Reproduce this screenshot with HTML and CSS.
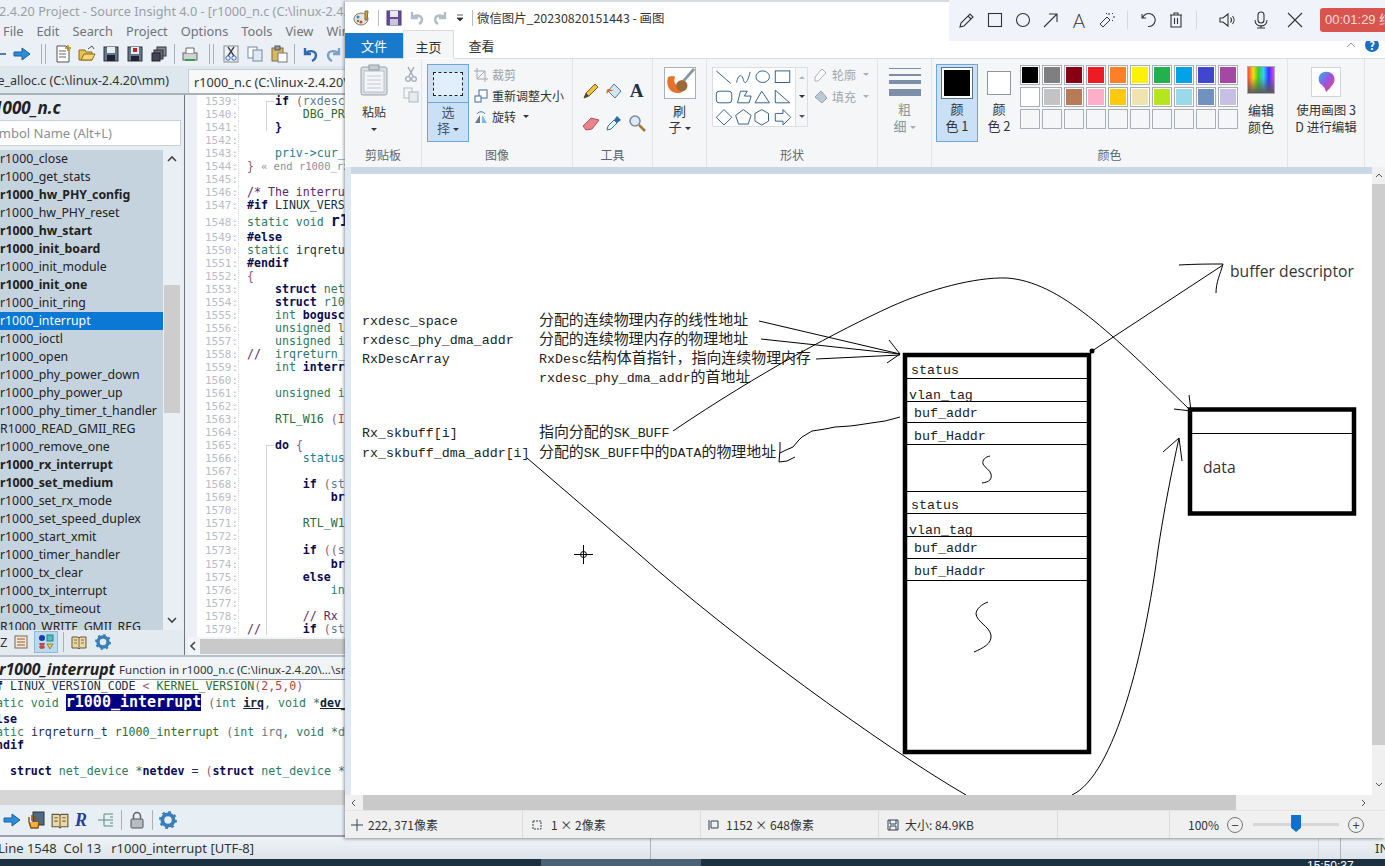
FILE: index.html
```html
<!DOCTYPE html>
<html lang="zh">
<head>
<meta charset="utf-8">
<title>Source Insight and Paint</title>
<link rel="stylesheet" href="styles.css">
</head>
<body>
<div class="desktop">

  <section class="si">
    <div class="si-title">2.4.20 Project - Source Insight 4.0 - [r1000_n.c (C:\linux-2.4.20\drivers\net)]</div>
    <nav class="si-menu"><span>File</span><span>Edit</span><span>Search</span><span>Project</span><span>Options</span><span>Tools</span><span>View</span><span>Window</span></nav>
    <div class="si-toolbar">
      <svg class="ic18 nudge-left" viewBox="0 0 18 18"><path d="M17 9H9V4L1 9l8 5v-5z" fill="#2b8fd8" stroke="#1a5d9c"/></svg>
      <svg class="ic18" viewBox="0 0 18 18"><path d="M1 7h8V3l8 6-8 6v-4H1z" fill="#2b8fd8" stroke="#1a5d9c"/></svg>
      <i class="grip"></i>
      <svg class="ic18" viewBox="0 0 18 18"><path d="M3 1h9l3 3v13H3z" fill="#fff" stroke="#555"/><path d="M5 6h7M5 9h7M5 12h7" stroke="#666"/><path d="M14 0v6M11 3h6" stroke="#b8860b" stroke-width="1.5"/></svg>
      <svg class="ic18" viewBox="0 0 18 18"><path d="M1 5h6l1 2h6v8H1z" fill="#e8c050" stroke="#8a6a20"/><path d="M3 15l3-6h11l-3 6z" fill="#f4d878" stroke="#8a6a20"/><path d="M10 4l4-3 2 3" fill="none" stroke="#555"/></svg>
      <svg class="ic18" viewBox="0 0 18 18"><rect x="2" y="2" width="14" height="14" fill="#64788c" stroke="#333"/><rect x="5" y="2" width="8" height="6" fill="#e8eef2"/><rect x="5" y="10" width="8" height="6" fill="#223"/></svg>
      <svg class="ic18" viewBox="0 0 18 18"><rect x="2" y="2" width="14" height="14" fill="#64788c" stroke="#333"/><rect x="5" y="2" width="8" height="7" fill="#e8eef2"/><rect x="7" y="3" width="4" height="4" fill="#d02020"/><rect x="5" y="11" width="8" height="5" fill="#223"/></svg>
      <svg class="ic18" viewBox="0 0 18 18"><rect x="7" y="2" width="9" height="9" fill="#889" stroke="#333"/><rect x="4" y="5" width="9" height="9" fill="#667" stroke="#333"/><rect x="2" y="8" width="8" height="8" fill="#445" stroke="#222"/></svg>
      <i class="bar"></i>
      <svg class="ic18" viewBox="0 0 18 18"><rect x="2" y="8" width="14" height="7" fill="#cfd3d6" stroke="#666"/><path d="M5 8V3h8v5" fill="#fff" stroke="#666"/><path d="M4 15h10" stroke="#38a048" stroke-width="2"/></svg>
      <i class="grip"></i>
      <svg class="ic18" viewBox="0 0 18 18"><rect x="2" y="1" width="14" height="16" fill="#eef2f6" stroke="#888"/><path d="M6 2l6 9M12 2l-6 9" stroke="#445" stroke-width="1.4"/><circle cx="6" cy="13" r="2.2" fill="none" stroke="#36a"/><circle cx="12" cy="13" r="2.2" fill="none" stroke="#36a"/></svg>
      <svg class="ic18" viewBox="0 0 18 18"><rect x="2" y="2" width="9" height="11" fill="#fff" stroke="#789"/><rect x="7" y="5" width="9" height="11" fill="#dfe9f3" stroke="#789"/></svg>
      <svg class="ic18" viewBox="0 0 18 18"><rect x="2" y="3" width="11" height="13" fill="#d9b860" stroke="#765"/><rect x="5" y="1" width="5" height="4" fill="#999" stroke="#555"/><rect x="8" y="8" width="9" height="9" fill="#fff" stroke="#777"/></svg>
      <i class="bar"></i>
      <svg class="ic18" viewBox="0 0 18 18"><path d="M4 3v6h6M4 9c3-4 10-4 11 1 0 3-2 5-4 6" fill="none" stroke="#3468b0" stroke-width="2.4"/></svg>
      <svg class="ic18" viewBox="0 0 18 18"><path d="M14 3v6H8M14 9c-3-4-10-4-11 1 0 3 2 5 4 6" fill="none" stroke="#7d9fc8" stroke-width="2.4"/></svg>
    </div>
    <div class="si-tabs">
      <div class="si-tab">page_alloc.c (C:\linux-2.4.20\mm)</div>
      <div class="si-tab-on">r1000_n.c (C:\linux-2.4.20\drivers\net)</div>
    </div>

    <div class="si-main">
      <aside class="sym">
        <div class="sym-file">r1000_n.c</div>
        <div class="sym-search"><span>Symbol Name (Alt+L)</span></div>
        <div class="sym-body">
          <ul class="sym-list">
            <li>r1000_close</li>
            <li>r1000_get_stats</li>
            <li class="b">r1000_hw_PHY_config</li>
            <li>r1000_hw_PHY_reset</li>
            <li class="b">r1000_hw_start</li>
            <li class="b">r1000_init_board</li>
            <li>r1000_init_module</li>
            <li class="b">r1000_init_one</li>
            <li>r1000_init_ring</li>
            <li class="sel">r1000_interrupt</li>
            <li>r1000_ioctl</li>
            <li>r1000_open</li>
            <li>r1000_phy_power_down</li>
            <li>r1000_phy_power_up</li>
            <li>r1000_phy_timer_t_handler</li>
            <li>R1000_READ_GMII_REG</li>
            <li>r1000_remove_one</li>
            <li class="b">r1000_rx_interrupt</li>
            <li class="b">r1000_set_medium</li>
            <li>r1000_set_rx_mode</li>
            <li>r1000_set_speed_duplex</li>
            <li>r1000_start_xmit</li>
            <li>r1000_timer_handler</li>
            <li>r1000_tx_clear</li>
            <li>r1000_tx_interrupt</li>
            <li>r1000_tx_timeout</li>
            <li>R1000_WRITE_GMII_REG</li>
          </ul>
          <div class="sym-scroll">
            <svg class="chev" viewBox="0 0 10 10"><path d="M1 7l4-4 4 4" fill="none" stroke="#444" stroke-width="1.6"/></svg>
            <div class="sym-thumb"></div>
            <svg class="chev chev-end" viewBox="0 0 10 10"><path d="M1 3l4 4 4-4" fill="none" stroke="#444" stroke-width="1.6"/></svg>
          </div>
        </div>
        <div class="sym-tools">
          <b class="az">Z</b>
          <svg class="ic16" viewBox="0 0 16 16"><rect x="2" y="2" width="12" height="12" fill="#f2e8d8" stroke="#765"/><path d="M4 5h8M4 8h8M4 11h8" stroke="#a05030"/></svg>
          <span class="sym-active"><svg class="ic16" viewBox="0 0 16 16"><circle cx="4" cy="4" r="3" fill="#1040b0"/><rect x="9" y="1" width="6" height="6" fill="#50c0c0" stroke="#287"/><path d="M1 10h6M1 13h6M3 9v6M5 9v6" stroke="#c02020" stroke-width="1.2"/><path d="M9 10h6l-3 5z" fill="#e8d040" stroke="#885"/></svg></span>
          <i class="bar"></i>
          <svg class="ic16 book" viewBox="0 0 16 16"><path d="M1 3h6l1 1 1-1h6v11H9l-1 1-1-1H1z" fill="#ecd9a0" stroke="#654"/><path d="M8 4v10M3 6h3M3 9h3M10 6h3M10 9h3" stroke="#765"/></svg>
          <svg class="ic16 gear" viewBox="0 0 16 16"><circle cx="8" cy="8" r="5" fill="none" stroke="#3b7fb8" stroke-width="3.4"/><circle cx="8" cy="8" r="7" fill="none" stroke="#3b7fb8" stroke-width="2" stroke-dasharray="2.4 3.1"/></svg>
        </div>
      </aside>

      <div class="editor-col">
        <div class="editor">
          <div class="guide guide-a"></div>
          <div class="guide guide-b"></div>
<div class="ed">
<span class="ln"><i>1539:</i><span class="k">    if</span> <span class="p">(</span><span class="v">rxdesc_</span></span>
<span class="ln"><i>1540:</i><span class="f">        DBG_PR</span></span>
<span class="ln"><i>1541:</i><span class="k">    }</span></span>
<span class="ln"><i>1542:</i></span>
<span class="ln"><i>1543:</i><span class="m">    priv-&gt;cur_</span></span>
<span class="ln"><i>1544:</i><span class="p">}</span> <span class="end">« end r1000_rx_</span></span>
<span class="ln"><i>1545:</i></span>
<span class="ln"><i>1546:</i><span class="c">/* The interru</span></span>
<span class="ln"><i>1547:</i><span class="k">#if</span> <span class="t">LINUX_VERS</span></span>
<span class="ln ln-big"><i>1548:</i><span class="g">static void </span><span class="big">r1000</span></span>
<span class="ln"><i>1549:</i><span class="k">#else</span></span>
<span class="ln"><i>1550:</i><span class="g">static</span> <span class="t">irqretu</span></span>
<span class="ln"><i>1551:</i><span class="k">#endif</span></span>
<span class="ln"><i>1552:</i><span class="p">{</span></span>
<span class="ln"><i>1553:</i><span class="k">    struct</span> <span class="g">net_</span></span>
<span class="ln"><i>1554:</i><span class="k">    struct</span> <span class="g">r10</span></span>
<span class="ln"><i>1555:</i><span class="g">    int</span> <span class="k">bogusc</span></span>
<span class="ln"><i>1556:</i><span class="g">    unsigned l</span></span>
<span class="ln"><i>1557:</i><span class="g">    unsigned i</span></span>
<span class="ln"><i>1558:</i><span class="c">//  </span><span class="g">irqreturn_</span></span>
<span class="ln"><i>1559:</i><span class="g">    int</span> <span class="k">interr</span></span>
<span class="ln"><i>1560:</i></span>
<span class="ln"><i>1561:</i><span class="g">    unsigned i</span></span>
<span class="ln"><i>1562:</i></span>
<span class="ln"><i>1563:</i><span class="f">    RTL_W16</span> <span class="p">(</span><span class="r">I</span></span>
<span class="ln"><i>1564:</i></span>
<span class="ln"><i>1565:</i><span class="k">    do</span> <span class="p">{</span></span>
<span class="ln"><i>1566:</i><span class="m">        status</span></span>
<span class="ln"><i>1567:</i></span>
<span class="ln"><i>1568:</i><span class="k">        if</span> <span class="p">(</span><span class="v">st</span></span>
<span class="ln"><i>1569:</i><span class="k">            br</span></span>
<span class="ln"><i>1570:</i></span>
<span class="ln"><i>1571:</i><span class="f">        RTL_W1</span></span>
<span class="ln"><i>1572:</i></span>
<span class="ln ln-tall"><i>1573:</i><span class="k">        if</span> <span class="p">((</span><span class="v">s</span></span>
<span class="ln ln-tall"><i>1574:</i><span class="k">            br</span></span>
<span class="ln"><i>1575:</i><span class="k">        else</span></span>
<span class="ln"><i>1576:</i><span class="m">            in</span></span>
<span class="ln"><i>1577:</i></span>
<span class="ln"><i>1578:</i><span class="c">        // Rx</span></span>
<span class="ln"><i>1579:</i><span class="c">//</span><span class="k">      if</span> <span class="p">(</span><span class="v">st</span></span>
</div>
        </div>
        <div class="ed-hscroll"><svg class="chev" viewBox="0 0 10 10"><path d="M7 1L3 5l4 4" fill="none" stroke="#444" stroke-width="1.6"/></svg><div class="ed-hthumb"></div></div>
      </div>
    </div>

    <div class="ctx-head"><strong>r1000_interrupt</strong><span>Function in r1000_n.c (C:\linux-2.4.20\...\src\r1000_n.c)</span></div>
<div class="ctx">
<span class="cl"><span class="k">#if</span> <span class="t">LINUX_VERSION_CODE</span> <span class="p">&lt;</span> <span class="f">KERNEL_VERSION</span><span class="p">(</span><span class="r">2,5,0</span><span class="p">)</span></span>
<span class="cl cl-big"><span class="g">static void </span><span class="hl">r1000_interrupt</span> <span class="p">(</span><span class="g">int</span> <u>irq</u><span class="g">, void *</span><u>dev_id</u></span>
<span class="cl"><span class="k">#else</span></span>
<span class="cl"><span class="g">static</span> <span class="t">irqreturn_t</span> <span class="f">r1000_interrupt</span> <span class="p">(</span><span class="g">int</span> <span class="v">irq</span><span class="g">, void *</span><span class="v">dev_id</span></span>
<span class="cl"><span class="k">#endif</span></span>
<span class="cl"> </span>
<span class="cl"><span class="k">    struct</span> <span class="g">net_device *</span><span class="k">netdev</span> <span class="t">=</span> <span class="p">(</span><span class="k">struct</span> <span class="g">net_device *</span></span>
</div>
    <div class="ctx-band"></div>
    <div class="si-bottomtools">
      <svg class="ic18" viewBox="0 0 18 18"><path d="M1 7h8V3l8 6-8 6v-4H1z" fill="#2b8fd8" stroke="#1a5d9c"/></svg>
      <svg class="ic18" viewBox="0 0 18 18"><rect x="6" y="1" width="11" height="13" fill="#4e6a86" stroke="#333"/><path d="M2 11V6M5 10V4M8 10V5M11 11V7M2 11l2 6h7l1-6" fill="#f0b040" stroke="#8a5010" stroke-width="1.4"/></svg>
      <svg class="ic18" viewBox="0 0 16 16"><path d="M1 3h6l1 1 1-1h6v11H9l-1 1-1-1H1z" fill="#ecd9a0" stroke="#654"/><path d="M8 4v10M3 6h3M3 9h3M10 6h3M10 9h3" stroke="#765"/></svg>
      <b class="si-r">R</b>
      <svg class="ic18" viewBox="0 0 18 18"><path d="M1 9h6M7 3v12M7 3h9M7 9h9M7 15h9M13 6h3M13 12h3" fill="none" stroke="#5a8a7a"/></svg>
      <i class="bar"></i>
      <svg class="ic18" viewBox="0 0 18 18"><rect x="3" y="8" width="12" height="9" rx="1" fill="#b4bcc4" stroke="#555"/><path d="M5.500 8V5a3.500 3.500 0 017 0v3" fill="none" stroke="#666" stroke-width="1.6"/></svg>
      <i class="bar"></i>
      <svg class="ic18" viewBox="0 0 16 16"><circle cx="8" cy="8" r="5" fill="none" stroke="#3b7fb8" stroke-width="3.4"/><circle cx="8" cy="8" r="7" fill="none" stroke="#3b7fb8" stroke-width="2" stroke-dasharray="2.4 3.1"/></svg>
    </div>
    <footer class="si-status">
      <span class="si-status-text">Line 1548&nbsp;&nbsp;Col 13&nbsp;&nbsp;&nbsp;r1000_interrupt [UTF-8]</span>
      <i class="st-sep st-a"></i><i class="st-sep st-b"></i><i class="st-sep st-c"></i><span class="st-ins">INS</span>
    </footer>
  </section>

  <section class="paint">
    <header class="p-title">
      <svg class="ic18" viewBox="0 0 18 18"><ellipse cx="8" cy="10" rx="7" ry="6" fill="#e8e4d8" stroke="#7a7a70"/><circle cx="5" cy="8" r="1.500" fill="#3a7fd0"/><circle cx="8" cy="13" r="1.500" fill="#d04040"/><circle cx="5" cy="12" r="1.300" fill="#40a050"/><path d="M12 2h3l-1 9h-2z" fill="#d8a030" stroke="#865"/></svg>
      <i class="p-vsep"></i>
      <svg class="ic16" viewBox="0 0 16 16"><rect x="1" y="1" width="14" height="14" fill="#6a4a9a" stroke="#4a3a7a"/><rect x="4" y="1" width="8" height="6" fill="#e8e8f0"/><rect x="4" y="9" width="8" height="6" fill="#c8c8d8"/></svg>
      <svg class="ic16" viewBox="0 0 16 16"><path d="M3 2v6h6M3 8c3-4 9-3 10 1 0 3-1 4-3 5" fill="none" stroke="#b4bcc6" stroke-width="2.400"/></svg>
      <svg class="ic16" viewBox="0 0 16 16"><path d="M13 2v6H7M13 8c-3-4-9-3-10 1 0 3 1 4 3 5" fill="none" stroke="#b4bcc6" stroke-width="2.400"/></svg>
      <svg class="ic10" viewBox="0 0 10 10"><path d="M2 2h6M2 5h6l-3 3z" fill="#333" stroke="#333" stroke-width=".8"/></svg>
      <i class="p-vsep"></i>
      <span class="p-name">微信图片_20230820151443 - 画图</span>
    </header>
    <nav class="p-tabs">
      <span class="p-file">文件</span>
      <span class="p-tab p-tab-on">主页</span>
      <span class="p-tab p-tab-view">查看</span>
      <span class="p-help-wrap"><svg class="ic10" viewBox="0 0 10 10"><path d="M1 7l4-4 4 4" fill="none" stroke="#999"/></svg><b class="p-help">?</b></span>
    </nav>

    <div class="ribbon">
      <div class="grp grp-clip">
        <div class="grp-body">
          <div class="paste">
            <svg class="ic-paste" viewBox="0 0 28 32"><rect x="1" y="3" width="26" height="28" rx="2" fill="#d9dfe5" stroke="#97a3af"/><rect x="4" y="7" width="20" height="21" fill="#f3f5f7" stroke="#b8c0c8"/><rect x="9" y="1" width="10" height="5" fill="#c4ccd4" stroke="#8f9ba7"/><path d="M7 12h14M7 16h14M7 20h14M7 24h14" stroke="#c4ccd4"/></svg>
            <span>粘贴</span><em class="caret"></em>
          </div>
          <div class="clip-small">
            <svg class="ic16" viewBox="0 0 16 16"><path d="M5 1l5 9M11 1L6 10" stroke="#9aa4ae" stroke-width="1.500"/><circle cx="5" cy="13" r="2.300" fill="none" stroke="#9aa4ae" stroke-width="1.300"/><circle cx="11" cy="13" r="2.300" fill="none" stroke="#9aa4ae" stroke-width="1.300"/></svg>
            <svg class="ic16" viewBox="0 0 16 16"><rect x="1" y="1" width="8" height="10" fill="#f3f5f7" stroke="#b0b8c0"/><rect x="6" y="5" width="9" height="10" fill="#e6eaee" stroke="#a8b0b8"/></svg>
          </div>
        </div>
        <div class="grp-label">剪贴板</div>
      </div>

      <div class="grp grp-image">
        <div class="grp-body">
          <div class="sel-btn">
            <div class="sel-top"><div class="sel-dash"></div></div>
            <div class="sel-text"><span>选</span><span>择<em class="caret"></em></span></div>
          </div>
          <div class="img-cmds">
            <span class="muted"><svg class="ic14" viewBox="0 0 14 14"><path d="M3 0v11h11M0 3h11v11M3 11l8-8" fill="none" stroke="#a0a8b0"/></svg>裁剪</span>
            <span><svg class="ic14" viewBox="0 0 14 14"><rect x="5" y="1" width="8" height="8" fill="#fff" stroke="#3a6ea8"/><rect x="1" y="7" width="6" height="6" fill="#fff" stroke="#3a6ea8"/></svg>重新调整大小</span>
            <span><svg class="ic14" viewBox="0 0 14 14"><path d="M1 13L6 5v8z" fill="#6a7a8a"/><path d="M8 13V5l5 8z" fill="#7ab8e8"/><path d="M3 4c2-3 6-3 8 0" fill="none" stroke="#2a7ac0"/></svg>旋转<em class="caret"></em></span>
          </div>
        </div>
        <div class="grp-label">图像</div>
      </div>

      <div class="grp grp-tools">
        <div class="grp-body tool-grid">
          <svg class="ic18" viewBox="0 0 18 18"><path d="M2 16l2-5L13 2l3 3-9 9z" fill="#f0c040" stroke="#7a6020"/><path d="M2 16l2-5 3 3z" fill="#444"/></svg>
          <svg class="ic18" viewBox="0 0 18 18"><path d="M9 2l7 7-6 7-7-7z" fill="#d4e4f2" stroke="#4a7aa8"/><path d="M9 9L4 7c-2 0-3 2-2 5 1-2 2-3 4-3z" fill="#d8662a"/></svg>
          <b class="tool-a">A</b>
          <svg class="ic18" viewBox="0 0 18 18"><path d="M1 12l8-8 8 2-7 9-6 1z" fill="#e8848c" stroke="#b05058"/></svg>
          <svg class="ic18" viewBox="0 0 18 18"><path d="M2 16l1-4 6-6 3 3-6 6z" fill="#dff" stroke="#567"/><path d="M9 6l3-4 4 4-4 3z" fill="#2a6ea8"/></svg>
          <svg class="ic18" viewBox="0 0 18 18"><circle cx="7" cy="7" r="5" fill="#dbeaf6" stroke="#7a8a9a" stroke-width="1.500"/><path d="M11 11l6 6" stroke="#a8753a" stroke-width="2.500"/></svg>
        </div>
        <div class="grp-label">工具</div>
      </div>

      <div class="grp grp-brush">
        <div class="grp-body brush">
          <div class="brush-pic"><svg viewBox="0 0 32 32"><path d="M31 1L17 17" stroke="#8a96a0" stroke-width="3"/><path d="M3 10c-3 12 6 19 14 16 5-3 7-8 3-12-3-2-7 0-8 4-2-2-3-5-1-9-3 0-6-1-8 1z" fill="#e8702a"/><ellipse cx="18" cy="19" rx="6" ry="6" fill="#9a6a3a"/></svg></div>
          <span>刷</span><span>子<em class="caret"></em></span>
        </div>
        <div class="grp-label"></div>
      </div>

      <div class="grp grp-shapes">
        <div class="grp-body shapes">
          <div class="gallery">
            <svg class="gallery-pic" viewBox="0 0 82 60">
              <g fill="none" stroke="#2f5f86">
                <path d="M2 3l15 13"/><path d="M23 15c2-10 6-8 7-3s4 5 7-8"/><ellipse cx="50" cy="9" rx="7" ry="6"/><rect x="63" y="3" width="15" height="12"/>
                <rect x="2" y="24" width="16" height="12" rx="3"/><path d="M24 36l3-12h7l-3 5h7l-2 7z"/><path d="M49 24l8 12H42z"/><path d="M63 23v13h15z"/>
                <path d="M10 43l8 8-8 8-8-8z"/><path d="M30 43l8 6-3 9H25l-3-9z"/><path d="M49 43l7 4v8l-7 4-7-4v-8z"/><path d="M63 47h8v-4l8 8-8 8v-4h-8z"/>
              </g>
            </svg>
            <div class="gallery-scroll"><em class="caret caret-up"></em><em class="caret"></em><em class="caret caret-more"></em></div>
          </div>
          <div class="shape-cmds">
            <span><svg class="ic14" viewBox="0 0 14 14"><path d="M1 13V9l7-8 4 4-8 8z" fill="#fff" stroke="#a6b0ba"/></svg>轮廓<em class="caret caret-muted"></em></span>
            <span><svg class="ic14" viewBox="0 0 14 14"><path d="M7 1l6 7-5 5-7-6z" fill="#bcc8d4" stroke="#96a2ae"/></svg>填充<em class="caret caret-muted"></em></span>
          </div>
        </div>
        <div class="grp-label">形状</div>
      </div>

      <div class="grp grp-size">
        <div class="grp-body size">
          <div class="size-lines"><i class="l1"></i><i class="l2"></i><i class="l3"></i><i class="l4"></i></div>
          <span>粗</span><span>细<em class="caret caret-muted"></em></span>
        </div>
        <div class="grp-label"></div>
      </div>

      <div class="grp grp-colors">
        <div class="grp-body colors">
          <div class="col-btn col-on"><div class="swatch-big"><i class="fill-black"></i></div><span>颜</span><span>色 1</span></div>
          <div class="col-btn"><div class="swatch-mid"></div><span>颜</span><span>色 2</span></div>
          <div class="palette">
            <i class="c01"></i><i class="c02"></i><i class="c03"></i><i class="c04"></i><i class="c05"></i><i class="c06"></i><i class="c07"></i><i class="c08"></i><i class="c09"></i><i class="c10"></i>
            <i class="c11"></i><i class="c12"></i><i class="c13"></i><i class="c14"></i><i class="c15"></i><i class="c16"></i><i class="c17"></i><i class="c18"></i><i class="c19"></i><i class="c20"></i>
            <i></i><i></i><i></i><i></i><i></i><i></i><i></i><i></i><i></i><i></i>
          </div>
          <div class="edit-col"><div class="rainbow"></div><span>编辑</span><span>颜色</span></div>
        </div>
        <div class="grp-label">颜色</div>
      </div>

      <div class="grp grp-3d">
        <div class="grp-body p3d">
          <div class="p3d-pic"><svg viewBox="0 0 30 30"><defs><linearGradient id="drop" x1="0" y1="0" x2="1" y2="1"><stop offset="0" stop-color="#28b4e8"/><stop offset=".5" stop-color="#a050e0"/><stop offset="1" stop-color="#f05050"/></linearGradient></defs><path d="M15 4c7 0 10 5 9 10-1 4-6 9-9 12-1-4-2-6-6-9-3-3-3-13 6-13z" fill="url(#drop)"/></svg></div>
          <span>使用画图 3</span><span>D 进行编辑</span>
        </div>
        <div class="grp-label"></div>
      </div>
    </div>

    <div class="workspace">
      <div class="canvas-area">
        <svg class="drawing" viewBox="351 174 1152 648">
          <g class="dg-text">
            <text x="362" y="325"><tspan class="lat">rxdesc_space</tspan></text>
            <text x="362" y="344"><tspan class="lat">rxdesc_phy_dma_addr</tspan></text>
            <text x="362" y="363"><tspan class="lat">RxDescArray</tspan></text>
            <text x="362" y="437"><tspan class="lat">Rx_skbuff[i]</tspan></text>
            <text x="362" y="457"><tspan class="lat">rx_skbuff_dma_addr[i]</tspan></text>
            <text x="539" y="325">分配的连续物理内存的线性地址</text>
            <text x="539" y="344">分配的连续物理内存的物理地址</text>
            <text x="539" y="363"><tspan class="lat">RxDesc</tspan>结构体首指针，指向连续物理内存</text>
            <text x="539" y="382"><tspan class="lat">rxdesc_phy_dma_addr</tspan>的首地址</text>
            <text x="539" y="437">指向分配的<tspan class="lat">SK_BUFF</tspan></text>
            <text x="539" y="457">分配的<tspan class="lat">SK_BUFF</tspan>中的<tspan class="lat">DATA</tspan>的物理地址</text>
            <text x="911" y="374"><tspan class="lat">status</tspan></text>
            <text x="909" y="399"><tspan class="lat">vlan_tag</tspan></text>
            <text x="914" y="417"><tspan class="lat">buf_addr</tspan></text>
            <text x="914" y="440"><tspan class="lat">buf_Haddr</tspan></text>
            <text x="911" y="509"><tspan class="lat">status</tspan></text>
            <text x="909" y="534"><tspan class="lat">vlan_tag</tspan></text>
            <text x="914" y="552"><tspan class="lat">buf_addr</tspan></text>
            <text x="914" y="575"><tspan class="lat">buf_Haddr</tspan></text>
          </g>
          <g class="dg-sans">
            <text x="1230" y="277">buffer descriptor</text>
            <text x="1203" y="473">data</text>
          </g>
          <g fill="none" stroke="#000">
            <rect x="905" y="355" width="184" height="397" stroke-width="4.500"/>
            <rect x="1190" y="409.500" width="164" height="104" stroke-width="4.500"/>
            <path d="M907 378.500H1087M907 401.500H1087M907 422.500H1087M907 444.500H1087M907 491.500H1087M907 513.500H1087M907 536.500H1087M907 558.500H1087M907 580.500H1087M1192 433.500H1352"/>
            <path d="M759 321L900 354M761 339L900 354M816 359L900 355M889 340L900 354L887 363"/>
            <path d="M673 431C760 372 840 330 890 307C930 289 975 277 1007 278C1060 282 1110 332 1190 410M1174 409L1191 411L1189 395"/>
            <path d="M1092 351L1223 265M1179 265C1195 264 1210 264 1223 264C1220 275 1216 282 1216 293"/>
            <path d="M527 458L640 555C730 635 880 745 966 795"/>
            <path d="M1072 795C1115 775 1145 650 1158 550C1164 510 1172 470 1179 438M1163 452L1179 438L1182 461"/>
            <path d="M900 417L885 421L871 423L858 425L850 426L835 427L825 429L812 431L802 437L798 441L793 447L786 450L780 453M780 442L780 450L779 462L787 461L795 457"/>
            <path d="M990 456C985 457 982 460 983 464C985 468 990 470 991 474C992 479 990 482 982 483"/>
            <path d="M988 602C982 604 976 609 976 614C977 622 989 626 991 635C992 644 983 648 974 652"/>
            <circle cx="583.500" cy="554.500" r="3"/>
            <path d="M574 554.500H593M583.500 545V564"/>
          </g>
          <circle cx="1092" cy="351" r="2.500"/>
        </svg>
      </div>
      <div class="vscroll">
        <svg class="chev" viewBox="0 0 10 10"><path d="M2 7l3-3 3 3" fill="none" stroke="#555"/></svg>
        <div class="vthumb"></div>
        <svg class="chev" viewBox="0 0 10 10"><path d="M2 3l3 3 3-3" fill="none" stroke="#555"/></svg>
      </div>
    </div>

    <div class="hscroll">
      <svg class="chev" viewBox="0 0 10 10"><path d="M7 2L4 5l3 3" fill="none" stroke="#555"/></svg>
      <div class="hthumb"></div>
      <svg class="chev chev-right" viewBox="0 0 10 10"><path d="M3 2l3 3-3 3" fill="none" stroke="#555"/></svg>
    </div>

    <footer class="p-status">
      <div class="ps ps1"><svg class="ic12" viewBox="0 0 12 12"><path d="M6 0v12M0 6h12" stroke="#345"/></svg>222, 371像素</div>
      <div class="ps ps2"><svg class="ic12" viewBox="0 0 12 12"><rect x="2" y="2" width="8" height="8" fill="none" stroke="#345" stroke-dasharray="2 1"/></svg>1 × 2像素</div>
      <div class="ps ps3"><svg class="ic12" viewBox="0 0 12 12"><path d="M2 1v10M4 2h7v7H4z" fill="none" stroke="#345"/></svg>1152 × 648像素</div>
      <div class="ps ps4"><svg class="ic12" viewBox="0 0 12 12"><path d="M1 1h10v10H1zM3 1v4h6V1M3 11V7h6v4" fill="none" stroke="#345"/></svg>大小: 84.9KB</div>
      <div class="ps ps5"></div>
      <div class="ps6">
        <span>100%</span>
        <b class="zoom-btn">−</b>
        <div class="slider"><i class="slider-thumb"></i></div>
        <b class="zoom-btn">+</b>
      </div>
    </footer>
  </section>

  <div class="recorder">
    <svg class="ic18 rec" viewBox="0 0 18 18"><path d="M2 16l1-4 9-9 3 3-9 9zM10 5l3 3" fill="none" stroke="#333" stroke-width="1.100"/></svg>
    <svg class="ic18 rec" viewBox="0 0 18 18"><rect x="2.500" y="2.500" width="13" height="13" fill="none" stroke="#333" stroke-width="1.100"/></svg>
    <svg class="ic18 rec" viewBox="0 0 18 18"><circle cx="9" cy="9" r="6.500" fill="none" stroke="#333" stroke-width="1.100"/></svg>
    <svg class="ic18 rec" viewBox="0 0 18 18"><path d="M2 16L15 3M7 3h8v8" fill="none" stroke="#333" stroke-width="1.100"/></svg>
    <span class="rec rec-a">A</span>
    <svg class="ic18 rec" viewBox="0 0 18 18"><path d="M2 13l7-7 3 3-7 7zM11 2v2M15 6h2M14 3l1-1M14 9l1 1M9 3l-1-1" fill="none" stroke="#333"/></svg>
    <i class="rec-sep"></i>
    <svg class="ic18 rec" viewBox="0 0 18 18"><path d="M3 3v4h4M3.500 7A6.500 6.500 0 119 15.500" fill="none" stroke="#333" stroke-width="1.100"/></svg>
    <svg class="ic18 rec" viewBox="0 0 18 18"><path d="M3 4h12M7 4V2h4v2M4 4v12h10V4M7.500 7v6M10.500 7v6" fill="none" stroke="#333" stroke-width="1.100"/></svg>
    <i class="rec-sep rec-sep-lg"></i>
    <svg class="ic18 rec rec-wide" viewBox="0 0 18 18"><path d="M2 7v4h3l5 4V3L5 7zM12.500 6.500c1.300 1.500 1.300 3.500 0 5M14.500 5c2 2.300 2 5.700 0 8" fill="none" stroke="#333" stroke-width="1.100"/></svg>
    <svg class="ic18 rec rec-wide" viewBox="0 0 18 18"><rect x="6" y="1" width="6" height="11" rx="3" fill="none" stroke="#333" stroke-width="1.100"/><path d="M3 9c0 8 12 8 12 0M9 14v3M5 17h8" fill="none" stroke="#333" stroke-width="1.100"/></svg>
    <svg class="ic18 rec rec-wide" viewBox="0 0 18 18"><path d="M2 2l14 14M16 2L2 16" fill="none" stroke="#333" stroke-width="1.100"/></svg>
    <span class="rec-time">00:01:29 结束录制</span>
  </div>

  <div class="taskbar"><i class="task-active"></i><span class="task-clock">15:50:37</span></div>
</div>
</body>
</html>
```
FILE: styles.css
```css
* { box-sizing: border-box; }
html, body { margin: 0; padding: 0; }
body { width: 1385px; height: 866px; overflow: hidden; background: #1d3040; font-family: "Noto Sans", "Noto Sans CJK SC", sans-serif; }
svg { display: block; flex: none; }
i, em { font-style: normal; display: block; }
ul { margin: 0; padding: 0; list-style: none; }
.desktop { position: relative; width: 1385px; height: 866px; overflow: hidden; }
.ic10 { width: 10px; height: 10px; }
.ic12 { width: 12px; height: 12px; }
.ic14 { width: 14px; height: 14px; }
.ic16 { width: 16px; height: 16px; }
.ic18 { width: 18px; height: 18px; }
.chev { width: 10px; height: 10px; }

/* Source Insight window */
.si { position: absolute; left: 0; top: 0; width: 1385px; height: 859px; background: #eaf0f5; display: flex; flex-direction: column; overflow: hidden; }
.si-title { height: 21px; padding-top: 2px; font-size: 12.7px; line-height: 18px; color: #9a9fa4; white-space: nowrap; margin-left: -1px; flex: none; }
.si-menu { height: 21px; flex: none; display: flex; gap: 13px; padding-left: 3px; font-size: 12.8px; line-height: 21px; color: #6f7478; }
.si-toolbar { height: 24px; flex: none; display: flex; align-items: center; gap: 6px; }
.nudge-left { margin-left: -11px; }
.grip { width: 5px; height: 20px; border-left: 1px solid #a9b0b6; border-right: 1px solid #a9b0b6; margin: 0 2px 0 4px; }
.bar { width: 1px; height: 20px; background: #a9b0b6; flex: none; }
.si-tabs { height: 29px; flex: none; padding-top: 3px; display: flex; background: #dfe7ee; border-bottom: 2px solid #a8b2bb; font-size: 12.5px; line-height: 24px; color: #333; overflow: hidden; }
.si-tab { white-space: nowrap; margin-left: -25px; width: 213px; flex: none; }
.si-tab-on { white-space: nowrap; background: #f6f8fa; padding-left: 5px; border: 1px solid #c5ced6; border-bottom: 0; width: 400px; flex: none; font-size: 12.7px; }
.si-main { height: 560px; flex: none; display: flex; }
.sym { width: 185px; flex: none; border-right: 1px solid #6d747a; background: #e7edf2; display: flex; flex-direction: column; }
.sym-file { height: 25px; margin-left: -14px; font-size: 17px; line-height: 26px; font-weight: 700; font-style: italic; color: #222; }
.sym-search { width: 181px; height: 26px; background: #fff; border: 1px solid #c9d0d6; border-left: 0; font-size: 13px; line-height: 24px; color: #8a8f94; overflow: hidden; }
.sym-search span { display: block; margin-left: -15px; white-space: nowrap; }
.sym-body { margin-top: 4px; height: 480px; display: flex; overflow: hidden; }
.sym-list { width: 163px; flex: none; background: #c5d3de; overflow: hidden; font-size: 12.3px; color: #222; }
.sym-list li { height: 18px; line-height: 17px; white-space: nowrap; }
.sym-list .b { font-weight: 700; }
.sym-list .sel { background: #0a78d4; color: #fff; }
.sym-scroll { width: 18px; background: #e9eff3; display: flex; flex-direction: column; align-items: center; padding-top: 4px; }
.sym-thumb { width: 16px; height: 128px; margin-top: 121px; background: #cdcdcd; }
.chev-end { margin-top: auto; margin-bottom: 5px; }
.sym-tools { height: 25px; display: flex; align-items: center; gap: 5px; background: #e3ebf1; font-size: 13px; padding-bottom: 1px; }
.az { color: #333; font-weight: 400; width: 8px; }
.sym-active { width: 24px; height: 22px; display: flex; align-items: center; justify-content: center; background: #bcd8ee; border: 1px solid #8fbadb; }
.book { margin-left: 2px; }
.gear { margin-left: 3px; }

/* Source Insight editor */
.editor-col { flex: 1; display: flex; flex-direction: column; min-width: 0; }
.editor { position: relative; height: 542px; margin-left: 12px; background: #fff; overflow: hidden; }
.guide { position: absolute; left: 69px; width: 8px; border-left: 1px solid #d2d6da; border-top: 1px solid #d2d6da; }
.guide-a { top: 6px; height: 30px; }
.guide-b { top: 350px; height: 190px; }
.ed { font-family: "DejaVu Sans Mono", monospace; font-size: 11.6px; color: #223; }
.ln { display: block; height: 13px; line-height: 13px; white-space: pre; }
.ln-big { height: 19px; line-height: 19px; }
.ln-tall { height: 14px; line-height: 14px; }
.ln i { display: inline-block; width: 42px; padding-left: 8px; margin-right: 8px; font-size: 11px; color: #b9bdc1; border-right: 1px dotted #dadde0; }
.k { color: #0a0a50; font-weight: 700; }
.g { color: #2e7a62; }
.f { color: #2c6d34; }
.m { color: #1f7c8a; }
.c { color: #5a2a70; }
.p { color: #8c5a78; }
.v { color: #5a7d8c; }
.r { color: #b0423c; }
.t { color: #20304a; }
.end { color: #8c9096; font-size: 10.5px; }
.big { font-size: 15px; font-weight: 700; color: #0a0a50; }
.ed-hscroll { height: 18px; margin-left: 3px; display: flex; align-items: center; gap: 2px; background: #f2f5f7; }
.ed-hthumb { flex: 1; height: 15px; background: #c9c9c9; }

/* Source Insight context window */
.ctx-head { height: 25px; flex: none; padding-top: 2px; background: #f0f4f7; border-top: 2px solid #b7c0c8; border-bottom: 1px solid #8f979e; display: flex; gap: 4px; align-items: center; white-space: nowrap; }
.ctx-head strong { font-size: 15.800px; font-style: italic; color: #222; margin-left: -1px; }
.ctx-head span { font-size: 11.500px; color: #333; }
.ctx { height: 110px; flex: none; background: #fff; font-family: "DejaVu Sans Mono", monospace; font-size: 11.6px; color: #223; overflow: hidden; }
.cl { display: block; height: 13px; line-height: 13px; white-space: pre; margin-left: -18px; }
.cl-big { height: 20px; line-height: 19px; padding-top: 1px; }
.hl { display: inline-block; background: #000080; color: #fff; font-size: 15px; font-weight: 700; line-height: 17px; }
.ctx u { color: #123; font-weight: 700; }
.ctx-band { height: 15px; flex: none; background: #d6d6d6; }
.si-bottomtools { height: 32px; flex: none; padding-left: 3px; display: flex; align-items: center; gap: 6px; background: #e8eff4; border-bottom: 2px solid #99a2aa; }
.si-r { width: 16px; font: italic 700 18px "Liberation Serif", serif; color: #263f9c; }
.si-status { flex: 1; display: flex; align-items: center; background: linear-gradient(#eef3f6, #dde5ea); font-size: 13px; color: #333; white-space: nowrap; position: relative; }
.si-status-text { margin-left: -2px; }
.st-sep { position: absolute; top: 0; bottom: 0; width: 1px; background: #aeb6bc; }
.st-a { left: 650px; }
.st-b { left: 1318px; background: #d2d8dc; }
.st-c { left: 1340px; }
.st-ins { position: absolute; left: 1375px; top: 2px; }

/* Paint window */
.paint { position: absolute; left: 345px; top: 0; width: 1040px; height: 838px; background: #fff; display: flex; flex-direction: column; box-shadow: -1px 1px 3px rgba(60, 70, 80, .55); font-family: "Noto Sans CJK SC", "Noto Sans", sans-serif; font-size: 12px; color: #333; overflow: hidden; }
.p-title { height: 30px; flex: none; padding: 4px 0 0 8px; display: flex; align-items: center; gap: 7px; border-top: 2px solid #d8dcdf; }
.p-vsep { width: 1px; height: 16px; background: #b6bcc2; }
.p-name { font-size: 12.400px; margin: -1px 0 0 -3px; white-space: nowrap; }
.p-tabs { height: 29px; flex: none; display: flex; border-bottom: 1px solid #dadbdc; font-size: 13px; line-height: 25px; position: relative; }
.p-file { width: 58px; height: 25px; margin-top: 3px; text-align: center; background: #1979ca; color: #fff; }
.p-tab { width: 51px; height: 29px; padding-top: 3px; text-align: center; }
.p-tab-on { border: 1px solid #dadbdc; border-bottom: 1px solid #fff; background: #f5f6f7; margin-bottom: -1px; }
.p-tab-view { margin-left: 2px; }
.p-help-wrap { margin-left: auto; margin-right: 6px; display: flex; align-items: center; gap: 9px; margin-top: 5px; height: 20px; }
.p-help { width: 14px; height: 14px; border-radius: 50%; background: #1a70c0; color: #fff; font-size: 11px; line-height: 14px; text-align: center; }
.ribbon { height: 108px; display: flex; background: #f5f6f7; flex: none; }
.grp { display: flex; flex-direction: column; border-right: 1px solid #e2e4e7; flex: none; }
.grp-body { height: 86px; padding-top: 5px; display: flex; }
.grp-label { height: 22px; line-height: 20px; text-align: center; color: #5c6670; }
.grp-clip { width: 77px; }
.grp-image { width: 151px; }
.grp-tools { width: 80px; }
.grp-brush { width: 54px; }
.grp-shapes { width: 171px; }
.grp-size { width: 54px; }
.grp-colors { width: 356px; }
.grp-3d { width: 77px; }
.caret { display: inline-block; width: 0; height: 0; border: 3px solid transparent; border-top: 3px solid #333; border-bottom: 0; vertical-align: middle; margin-left: 3px; }
.caret-muted { border-top-color: #a8aeb4; }
.caret-up { border-top: 0; border-bottom: 3px solid #b0b6bc; }
.caret-more { border-top-color: #555; box-shadow: 0 -3px 0 -2px #555; }
.paste { width: 44px; margin-left: 7px; display: flex; flex-direction: column; align-items: center; }
.ic-paste { width: 28px; height: 32px; margin-bottom: 7px; }
.paste .caret { margin: 8px 0 0; }
.clip-small { margin-left: 7px; padding-top: 2px; display: flex; flex-direction: column; gap: 5px; opacity: .9; }
.sel-btn { width: 42px; height: 78px; margin-left: 5px; background: #c9e0f7; border: 1px solid #6ea6dc; display: flex; flex-direction: column; }
.sel-top { height: 38px; border-bottom: 1px solid #6ea6dc; display: flex; align-items: center; justify-content: center; }
.sel-dash { width: 30px; height: 24px; border: 1px dashed #222; background: #e1eefb; }
.sel-text { display: flex; flex-direction: column; align-items: center; color: #44586c; line-height: 16px; font-size: 13px; padding-top: 1px; }
.img-cmds { margin-left: 5px; display: flex; flex-direction: column; gap: 2px; padding-top: 1px; font-size: 12px; }
.img-cmds span, .shape-cmds span { display: flex; align-items: center; gap: 4px; height: 19px; white-space: nowrap; }
.muted { color: #9aa2aa; }
.tool-grid { display: grid; grid-template-columns: repeat(3, 23px); grid-template-rows: 32px 32px; justify-items: center; align-items: center; padding: 16px 0 0 6px; align-content: start; gap: 0; }
.tool-a { font: 700 19px "Liberation Serif", serif; color: #1f3247; }
.brush { flex-direction: column; align-items: center; line-height: 16px; font-size: 13px; }
.brush-pic { width: 32px; height: 32px; margin: 3px 0 4px; border: 1px solid #a9b0b8; background: #fff; }
.shapes { padding-left: 5px; gap: 6px; }
.gallery { width: 96px; height: 60px; margin-top: 3px; display: flex; background: #fff; border: 1px solid #dadfe4; }
.gallery-pic { width: 82px; height: 58px; }
.gallery-scroll { flex: 1; border-left: 1px solid #dadfe4; display: flex; flex-direction: column; align-items: center; justify-content: space-around; background: #f5f6f7; }
.gallery-scroll .caret { margin: 0; }
.shape-cmds { display: flex; flex-direction: column; gap: 3px; padding-top: 1px; color: #a0a8b0; }
.size { flex-direction: column; align-items: center; color: #8d949c; line-height: 17px; font-size: 13px; }
.size-lines { width: 32px; height: 28px; margin: 4px 0 4px; display: flex; flex-direction: column; justify-content: space-between; }
.size-lines i { background: #7d8ea8; }
.l1 { height: 1px; }
.l2 { height: 2px; }
.l3 { height: 4px; }
.l4 { height: 7px; }
.colors { padding-left: 4px; }
.col-btn { width: 42px; height: 78px; flex: none; display: flex; flex-direction: column; align-items: center; line-height: 17px; font-size: 13px; border: 1px solid transparent; }
.col-on { background: #c9e0f7; border-color: #6ea6dc; }
.swatch-big { width: 32px; height: 32px; margin: 2px 0 1px; padding: 2px; border: 1px solid #56708a; background: #fff; }
.fill-black { width: 100%; height: 100%; background: #000; }
.swatch-mid { width: 24px; height: 24px; margin: 6px 0 5px; background: #fff; border: 1px solid #8f979e; }
.palette { display: grid; grid-template-columns: repeat(10, 20px); grid-auto-rows: 20px; gap: 2px; margin: 1px 0 0 0; height: 64px; }
.palette i { border: 1px solid #a9afb5; background: #f5f6f7; }
.c01, .c02, .c03, .c04, .c05, .c06, .c07, .c08, .c09, .c10, .c11, .c12, .c13, .c14, .c15, .c16, .c17, .c18, .c19, .c20 { box-shadow: inset 0 0 0 1px #fff; }
.palette .c01 { background: #000; }
.palette .c02 { background: #7f7f7f; }
.palette .c03 { background: #880015; }
.palette .c04 { background: #ed1c24; }
.palette .c05 { background: #ff7f27; }
.palette .c06 { background: #fff200; }
.palette .c07 { background: #22b14c; }
.palette .c08 { background: #00a2e8; }
.palette .c09 { background: #3f48cc; }
.palette .c10 { background: #a349a4; }
.palette .c11 { background: #fff; }
.palette .c12 { background: #c3c3c3; }
.palette .c13 { background: #b97a57; }
.palette .c14 { background: #ffaec9; }
.palette .c15 { background: #ffc90e; }
.palette .c16 { background: #efe4b0; }
.palette .c17 { background: #b5e61d; }
.palette .c18 { background: #99d9ea; }
.palette .c19 { background: #7092be; }
.palette .c20 { background: #c8bfe7; }
.edit-col { margin-left: 9px; width: 28px; display: flex; flex-direction: column; align-items: center; line-height: 17px; font-size: 13px; }
.rainbow { width: 28px; height: 28px; margin: 2px 0 7px; border: 1px solid #a9afb5; background: linear-gradient(#0000 40%, #5a5a5a), linear-gradient(90deg, #f44, #fd0, #3c3, #3cf, #33f, #f3f); }
.p3d { flex-direction: column; align-items: center; line-height: 17px; font-size: 12.5px; white-space: nowrap; }
.p3d-pic { width: 30px; height: 30px; margin: 3px 0 4px; background: #fff; border: 1px solid #d0d4d8; }

/* Paint canvas */
.workspace { height: 628px; flex: none; display: flex; background: #cbd7e5; }
.canvas-area { flex: 1; min-width: 0; padding: 7px 0 0 6px; overflow: hidden; background: linear-gradient(90deg, #dde8f2 6px, #cbd7e5 6px); }
.drawing { width: 1152px; height: 648px; background: #fff; }
.dg-text text { font-family: "Liberation Mono", "Noto Sans CJK SC", monospace; font-size: 14.950px; fill: #222; }
.dg-text .lat { font-size: 13.300px; }
.dg-sans text { font-family: "Open Sans", sans-serif; font-size: 15.700px; fill: #333; }
.vscroll { width: 13px; flex: none; background: #f0f0f0; display: flex; flex-direction: column; align-items: center; padding: 3px 0 5px; }
.vthumb { width: 13px; height: 561px; margin: 4px 0 35px; background: #cdcdcd; flex: none; }
.hscroll { height: 15px; flex: none; display: flex; align-items: center; background: #f0f0f0; padding-left: 3px; }
.hthumb { width: 873px; height: 15px; margin-left: 5px; background: #c9c9c9; }
.chev-right { margin-left: 123px; }
.p-status { height: 28px; flex: none; display: flex; background: #f0f0f0; border-top: 1px solid #e4e4e4; font-size: 12px; color: #333; }
.ps { display: flex; align-items: center; padding-left: 3px; border-right: 1px solid #dcdcdc; white-space: nowrap; }
.ps1 { width: 178px; padding-left: 6px; gap: 5px; }
.ps2 { width: 178px; gap: 8px; padding-left: 8px; }
.ps3 { width: 178px; gap: 7px; padding-left: 6px; }
.ps4 { width: 179px; gap: 6px; padding-left: 8px; }
.ps5 { width: 112px; }
.ps6 { flex: 1; display: flex; align-items: center; padding-left: 18px; }
.zoom-btn { width: 16px; height: 16px; margin-left: 8px; border: 1px solid #777; border-radius: 50%; font-weight: 400; font-size: 13px; line-height: 13px; text-align: center; color: #444; }
.slider { position: relative; width: 86px; height: 3px; margin-left: 10px; background: #d6d6d6; }
.slider-thumb { position: absolute; left: 38px; top: -8px; width: 10px; height: 17px; background: #1070d0; clip-path: polygon(0 0, 100% 0, 100% 75%, 50% 100%, 0 75%); }
.zoom-btn + .slider + .zoom-btn { margin-left: 9px; }

/* Recorder bar */
.recorder { position: absolute; left: 949px; top: 0; width: 436px; height: 41px; background: #f0f4fa; display: flex; align-items: center; padding: 0 0 1px 9px; overflow: hidden; }
.rec { margin-right: 10px; }
.rec-a { width: 18px; flex: none; font: 300 19px "Lato", sans-serif; color: #333; text-align: center; }
.rec-sep { width: 1px; height: 18px; flex: none; background: #d5d9de; margin: 0 11px 0 1px; }
.rec-sep-lg { margin-right: 21px; }
.rec-wide { margin-right: 16px; margin-left: 0; }
.rec-time { flex: none; width: 100px; height: 24px; background: #d9534f; color: #f8dcda; border-radius: 3px; font: 13px/24px "Liberation Sans", "Noto Sans CJK SC", sans-serif; padding-left: 5px; white-space: nowrap; overflow: hidden; }

/* Taskbar */
.taskbar { position: absolute; left: 0; top: 859px; width: 1385px; height: 7px; background: #1d3040; overflow: hidden; }
.task-active { position: absolute; left: 541px; top: 0; width: 160px; height: 7px; background: #4b6274; }
.task-clock { position: absolute; left: 1307px; top: -1px; font: 12px/16px "Liberation Sans", sans-serif; color: #fff; }
```
